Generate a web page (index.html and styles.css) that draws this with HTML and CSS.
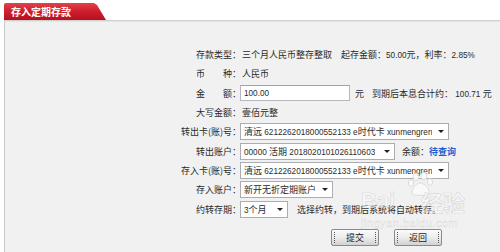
FILE: index.html
```html
<!DOCTYPE html>
<html lang="zh-CN">
<head>
<meta charset="utf-8">
<title>存入定期存款</title>
<link rel="stylesheet" href="styles.css">
</head>
<body>
<div class="page">
  <div class="head"><div class="tab">存入定期存款</div></div>
  <div class="panel">
    <div class="form">
      <div class="lb">存款类型：</div>
      <div class="val">三个月人民币整存整取<span class="gap9">起存金额：<span class="n">50.00</span>元，利率：<span class="n">2.85%</span></span></div>

      <div class="lb">币　　种：</div>
      <div class="val">人民币</div>

      <div class="lb">金　　额：</div>
      <div class="val"><div class="inp"><span class="n">100.00</span></div><span class="yuan">元</span><span class="total">到期后本息合计约：<span class="n"> 100.71 </span>元</span></div>

      <div class="lb">大写金额：</div>
      <div class="val">壹佰元整</div>

      <div class="lb">转出卡(账)号：</div>
      <div class="val"><div class="sel w-card"><span class="txt">清远<span class="n"> 6212262018000552133 e</span>时代卡<span class="n"> xunmengren</span></span><span class="arr"></span></div></div>

      <div class="lb">转出账户：</div>
      <div class="val"><div class="sel w-acct"><span class="txt"><span class="n">00000 </span>活期<span class="n"> 2018020101026110603</span></span><span class="arr"></span></div><span class="bal">余额：<a class="link" href="#">待查询</a></span></div>

      <div class="lb">存入卡(账)号：</div>
      <div class="val"><div class="sel w-card"><span class="txt">清远<span class="n"> 6212262018000552133 e</span>时代卡<span class="n"> xunmengren</span></span><span class="arr"></span></div></div>

      <div class="lb">存入账户：</div>
      <div class="val"><div class="sel w-new"><span class="txt">新开无折定期账户</span><span class="arr"></span></div></div>

      <div class="lb">约转存期：</div>
      <div class="val"><div class="sel w-term"><span class="txt"><span class="n">3</span>个月</span><span class="arr"></span></div><span class="hint">选择约转，到期后系统将自动转存。</span></div>
    </div>
    <div class="btns">
      <button class="btn" type="button">提交</button>
      <button class="btn" type="button">返回</button>
    </div>
    <div class="wm" aria-hidden="true">
      <svg class="paw" width="30" height="26" viewBox="0 0 30 26">
        <g fill="#fbfbfb" stroke="#d8d8d8" stroke-width="1">
          <ellipse cx="9" cy="6" rx="3" ry="4"/>
          <ellipse cx="17" cy="5" rx="3" ry="4"/>
          <ellipse cx="4" cy="12" rx="2.6" ry="3.4"/>
          <ellipse cx="23" cy="11" rx="2.6" ry="3.4"/>
          <path d="M13 12c-4 0-8 6-8 9s3 4 8 3c4 1 9 1 9-3s-5-9-9-9z"/>
        </g>
      </svg>
      <span class="wm-bai">Bai</span><span class="wm-jy">经验</span>
      <span class="wm-url">jingyan.baidu.com</span>
    </div>
  </div>
</div>
</body>
</html>
```
FILE: styles.css
```css
html, body {
  margin: 0;
  padding: 0;
  background: #ffffff;
}
body {
  font-family: "Noto Sans CJK SC", "Noto Sans", sans-serif;
  font-size: 9px;
  color: #2a2a2a;
  width: 500px;
  height: 252px;
  overflow: hidden;
}
.page {
  width: 500px;
  height: 252px;
  display: flex;
  flex-direction: column;
}
.head {
  height: 20px;
  padding-top: 3px;
  padding-left: 4px;
  box-sizing: border-box;
  display: flex;
}
.tab {
  width: 102px;
  height: 17px;
  box-sizing: border-box;
  padding-left: 7px;
  background: linear-gradient(#e2424c 0%, #d0202e 45%, #b5101e 100%);
  color: #ffffff;
  font-weight: bold;
  font-size: 10px;
  line-height: 17px;
  border-top-left-radius: 2px;
  clip-path: polygon(0 0, 90px 0, 93px 2px, 102px 17px, 0 17px);
}
.panel {
  flex: 1;
  margin-left: 4px;
  border-left: 1px solid #c9c9c9;
  border-top: 1px solid #cfcfcf;
  background: #f1f1f1;
  box-shadow: inset 0 1px 1px #e4e4e4;
  position: relative;
  display: flex;
  flex-direction: column;
}
.form {
  display: grid;
  grid-template-columns: 236px auto;
  grid-auto-rows: 19.3px;
  align-items: center;
  padding-top: 24px;
}
.lb {
  text-align: right;
  white-space: nowrap;
  color: #2a2a2a;
}
.val {
  display: flex;
  align-items: center;
  white-space: nowrap;
  padding-left: 1px;
}
.n {
  font-family: "Liberation Sans", sans-serif;
  font-size: 8.2px;
  white-space: pre;
}
.gap9 {
  margin-left: 9px;
}
.inp {
  margin-left: -2px;
  width: 110px;
  height: 16px;
  box-sizing: border-box;
  border: 1px solid #b5b8be;
  border-top-color: #9fa3aa;
  background: #ffffff;
  padding-left: 3px;
  display: flex;
  align-items: center;
}
.yuan {
  margin-left: 5px;
}
.total {
  margin-left: 8px;
}
.sel {
  margin-left: -2px;
  height: 17px;
  box-sizing: border-box;
  border: 1px solid #abadb3;
  background: #ffffff;
  display: flex;
  align-items: center;
  justify-content: space-between;
  padding: 0 4px 0 3px;
  overflow: hidden;
}
.txt {
  white-space: nowrap;
  overflow: hidden;
}
.arr {
  flex: none;
  width: 0;
  height: 0;
  margin-left: 4px;
  border-left: 3px solid transparent;
  border-right: 3px solid transparent;
  border-top: 3px solid #222;
}
.w-card { width: 209px; }
.w-acct { width: 155px; }
.w-new { width: 93px; }
.w-term { width: 48px; }
.bal {
  margin-left: 7px;
}
.link {
  color: #1f5fd0;
  text-decoration: none;
  font-weight: bold;
}
.hint {
  margin-left: 9px;
}
.btns {
  display: flex;
  gap: 15px;
  padding-left: 326px;
  margin-top: 10px;
}
.btn {
  position: relative;
  width: 48px;
  height: 17px;
  padding: 0;
  font-family: "Noto Sans CJK SC", sans-serif;
  font-size: 9px;
  color: #222;
  border: 1px solid #8a8a8a;
  border-radius: 2px;
  background: linear-gradient(#fbfbfb 0%, #ececec 50%, #d2d2d2 100%);
  cursor: pointer;
}
.btn::before,
.btn::after {
  content: "";
  position: absolute;
  top: 2px;
  bottom: 2px;
  width: 0;
  border-left: 1px dotted #555;
}
.btn::before { left: 2px; }
.btn::after { right: 2px; }
.wm {
  position: absolute;
  left: 350px;
  top: 150px;
  width: 130px;
  height: 60px;
  pointer-events: none;
  opacity: 0.85;
}
.paw {
  position: absolute;
  left: 52px;
  top: 0;
}
.wm-bai {
  position: absolute;
  left: 6px;
  top: 18px;
  font-family: "Liberation Sans", sans-serif;
  font-weight: bold;
  font-size: 22px;
  line-height: 24px;
  color: rgba(255, 255, 255, 0.55);
  -webkit-text-stroke: 0.6px rgba(180, 180, 180, 0.55);
}
.wm-jy {
  position: absolute;
  left: 66px;
  top: 18px;
  font-size: 22px;
  line-height: 24px;
  font-weight: bold;
  color: rgba(255, 255, 255, 0.55);
  -webkit-text-stroke: 0.6px rgba(180, 180, 180, 0.55);
}
.wm-url {
  position: absolute;
  left: 6px;
  top: 46px;
  font-family: "Liberation Sans", sans-serif;
  font-size: 11px;
  line-height: 12px;
  letter-spacing: 0.5px;
  color: rgba(255, 255, 255, 0.6);
  -webkit-text-stroke: 0.4px rgba(190, 190, 190, 0.6);
}
```
